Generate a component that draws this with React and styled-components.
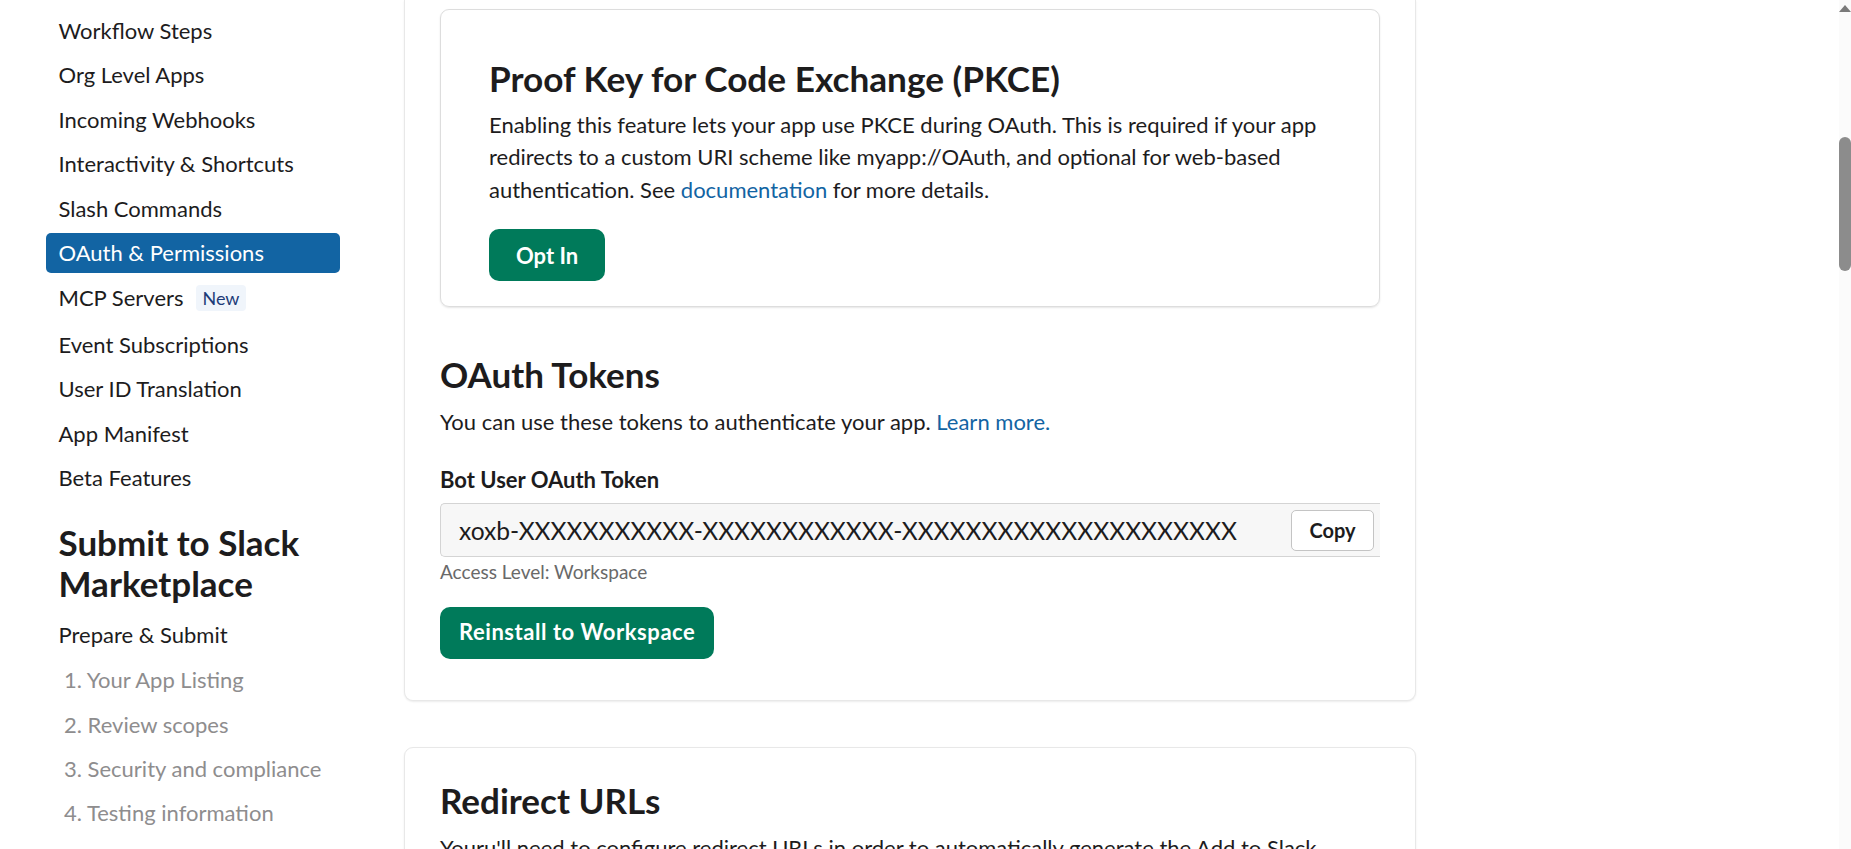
import styled, { createGlobalStyle } from 'styled-components';

const GlobalStyle = createGlobalStyle`
    html, body {
        margin: 0;
        height: 100%;
        overflow: hidden;
        background: #fff;
    }
    body {
        font-family: Lato, "Open Sans", sans-serif;
        color: #1d1c1d;
    }
`

const Page = styled.div`
    height: 849px;
    overflow: hidden;
    display: flex;
    align-items: flex-start;
    position: relative;
`

const Sidebar = styled.nav`
    width: 404px;
    flex-shrink: 0;
    box-sizing: border-box;
    padding: 8px 0 0 46px;
`

const NavList = styled.ul`
    list-style: none;
    margin: 0;
    padding: 0;
    width: 294px;
`

const StepList = styled(NavList)`
    margin-top: 1px;
`

const NavItem = styled.li`
    height: ${props => props.$tall ? '47.5px' : '44.5px'};
    display: flex;
    align-items: center;
    box-sizing: border-box;
    padding: ${props => props.$tall ? '0 0 2px 12.5px' : '0 0 0 12.5px'};
    font-size: 22px;
    color: #1d1c1d;
`

const ActiveItem = styled.li`
    height: 40px;
    margin: 2px 0;
    display: flex;
    align-items: center;
    box-sizing: border-box;
    padding-left: 12.5px;
    font-size: 22px;
    color: #fff;
    background: #1264a3;
    border-radius: 5px;
`

const NewBadge = styled.span`
    margin: 2px 0 0 13px;
    padding: 2px 6px;
    border-radius: 4px;
    background: #f0f5fb;
    color: #1d3c78;
    font-size: 18px;
    line-height: 22px;
`

const SideHeading = styled.h2`
    margin: 22px 0 8px 12.5px;
    font-size: 35px;
    line-height: 41px;
    font-weight: 700;
    color: #1d1c1d;
`

const StepItem = styled.li`
    height: 44.4px;
    display: flex;
    align-items: center;
    padding-left: 18px;
    font-size: 22px;
    color: #8e8d8e;
`

const Main = styled.main`
    width: 1012px;
    flex-shrink: 0;
    display: flex;
    flex-direction: column;
    gap: 46px;
`

const OuterCard = styled.section`
    background: #fff;
    border: 1px solid #e8e8e8;
    border-top: ${props => props.$cutTop ? 'none' : '1px solid #e8e8e8'};
    border-radius: ${props => props.$cutTop ? '0 0 9px 9px' : '9px'};
    box-shadow: 0 1px 2px rgba(0, 0, 0, .08);
    box-sizing: border-box;
    padding: ${props => props.$cutTop ? '9px 35px 41px' : '30px 35px 40px'};
`

const InnerCard = styled.div`
    border: 1px solid #dddddd;
    border-radius: 9px;
    box-shadow: 0 1px 2px rgba(0, 0, 0, .1);
    box-sizing: border-box;
    height: 298px;
    padding: 46px 48px 0;
`

const CardTitle = styled.h3`
    margin: 0;
    font-size: 35.2px;
    line-height: 44px;
    font-weight: 700;
    color: #1d1c1d;
`

const SectionTitle = styled.h2`
    margin: ${props => props.$first ? '0' : '45px 0 0'};
    font-size: 35px;
    line-height: 44px;
    font-weight: 700;
    color: #1d1c1d;
`

const Body = styled.p`
    margin: ${props => props.$top || '0'};
    font-size: 22px;
    line-height: 32.4px;
    color: #1d1c1d;
`

const Link = styled.a`
    color: #1264a3;
`

const Primary = styled.button`
    display: block;
    height: 52px;
    padding: ${props => props.$wide ? '0 19px 3px' : '0 27px'};
    margin: ${props => props.$top || '0'};
    border: none;
    border-radius: 10px;
    background: #007a5a;
    color: #fff;
    font-family: inherit;
    font-size: 22px;
    font-weight: 700;
    letter-spacing: ${props => props.$wide ? '.55px' : '0'};
`

const FieldLabel = styled.div`
    margin-top: 26px;
    font-size: 22px;
    line-height: 32px;
    font-weight: 700;
`

const TokenField = styled.div`
    margin-top: 7px;
    height: 54px;
    box-sizing: border-box;
    border: 1px solid #d4d4d4;
    border-right: none;
    border-radius: 5px 0 0 5px;
    background: #f7f7f7;
    display: flex;
    align-items: center;
    justify-content: space-between;
    padding: 0 6px 0 18px;
`

const TokenText = styled.span`
    font-size: 24.6px;
    color: #1d1c1d;
`

const CopyButton = styled.button`
    width: 83px;
    height: 41px;
    border: 1px solid #c4c4c4;
    border-radius: 5px;
    background: #fff;
    color: #1d1c1d;
    font-family: inherit;
    font-size: 20px;
    font-weight: 700;
`

const Hint = styled.div`
    margin-top: 3px;
    font-size: 19px;
    line-height: 24px;
    color: #696969;
`

const ScrollTrack = styled.div`
    position: absolute;
    top: 0;
    right: 0;
    bottom: 0;
    width: 12px;
    background: #fbfbfb;
`

const ScrollArrow = styled.div`
    width: 0;
    margin: 5px auto 0;
    border: 6px solid transparent;
    border-top: none;
    border-bottom: 7px solid #7a7a7a;
`

const ScrollThumb = styled.div`
    position: absolute;
    top: 137px;
    left: 0;
    width: 100%;
    height: 134px;
    border-radius: 6px;
    background: #8c8c8c;
`

const topNav = ['Workflow Steps', 'Org Level Apps', 'Incoming Webhooks', 'Interactivity & Shortcuts', 'Slash Commands'];
const lowerNav = ['Event Subscriptions', 'User ID Translation', 'App Manifest', 'Beta Features'];
const steps = ['1. Your App Listing', '2. Review scopes', '3. Security and compliance', '4. Testing information'];

function App () {
    return (
        <Page>
            <GlobalStyle />
            <Sidebar>
                <NavList>
                    {topNav.map(item => <NavItem key={item}>{item}</NavItem>)}
                    <ActiveItem>OAuth &amp; Permissions</ActiveItem>
                    <NavItem $tall>MCP Servers<NewBadge>New</NewBadge></NavItem>
                    {lowerNav.map(item => <NavItem key={item}>{item}</NavItem>)}
                </NavList>
                <SideHeading>Submit to Slack Marketplace</SideHeading>
                <NavList>
                    <NavItem>Prepare &amp; Submit</NavItem>
                </NavList>
                <StepList>
                    {steps.map(item => <StepItem key={item}>{item}</StepItem>)}
                </StepList>
            </Sidebar>
            <Main>
                <OuterCard $cutTop>
                    <InnerCard>
                        <CardTitle>Proof Key for Code Exchange (PKCE)</CardTitle>
                        <Body $top="9px 0 0">
                            Enabling this feature lets your app use PKCE during OAuth. This is required if your app redirects to a custom URI scheme like myapp://OAuth, and optional for web-based authentication. See <Link>documentation</Link> for more details.
                        </Body>
                        <Primary $top="23px 0 0">Opt In</Primary>
                    </InnerCard>
                    <SectionTitle>OAuth Tokens</SectionTitle>
                    <Body $top="10px 0 0">You can use these tokens to authenticate your app. <Link>Learn more.</Link></Body>
                    <FieldLabel>Bot User OAuth Token</FieldLabel>
                    <TokenField>
                        <TokenText>xoxb-XXXXXXXXXXX-XXXXXXXXXXXX-XXXXXXXXXXXXXXXXXXXXX</TokenText>
                        <CopyButton>Copy</CopyButton>
                    </TokenField>
                    <Hint>Access Level: Workspace</Hint>
                    <Primary $top="23px 0 0" $wide>Reinstall to Workspace</Primary>
                </OuterCard>
                <OuterCard>
                    <SectionTitle $first>Redirect URLs</SectionTitle>
                    <Body $top="10px 0 0">Youru'll need to configure redirect URLs in order to automatically generate the Add to Slack button or to distribute your app.</Body>
                </OuterCard>
            </Main>
            <ScrollTrack>
                <ScrollArrow />
                <ScrollThumb />
            </ScrollTrack>
        </Page>
    );
}

export default App;
